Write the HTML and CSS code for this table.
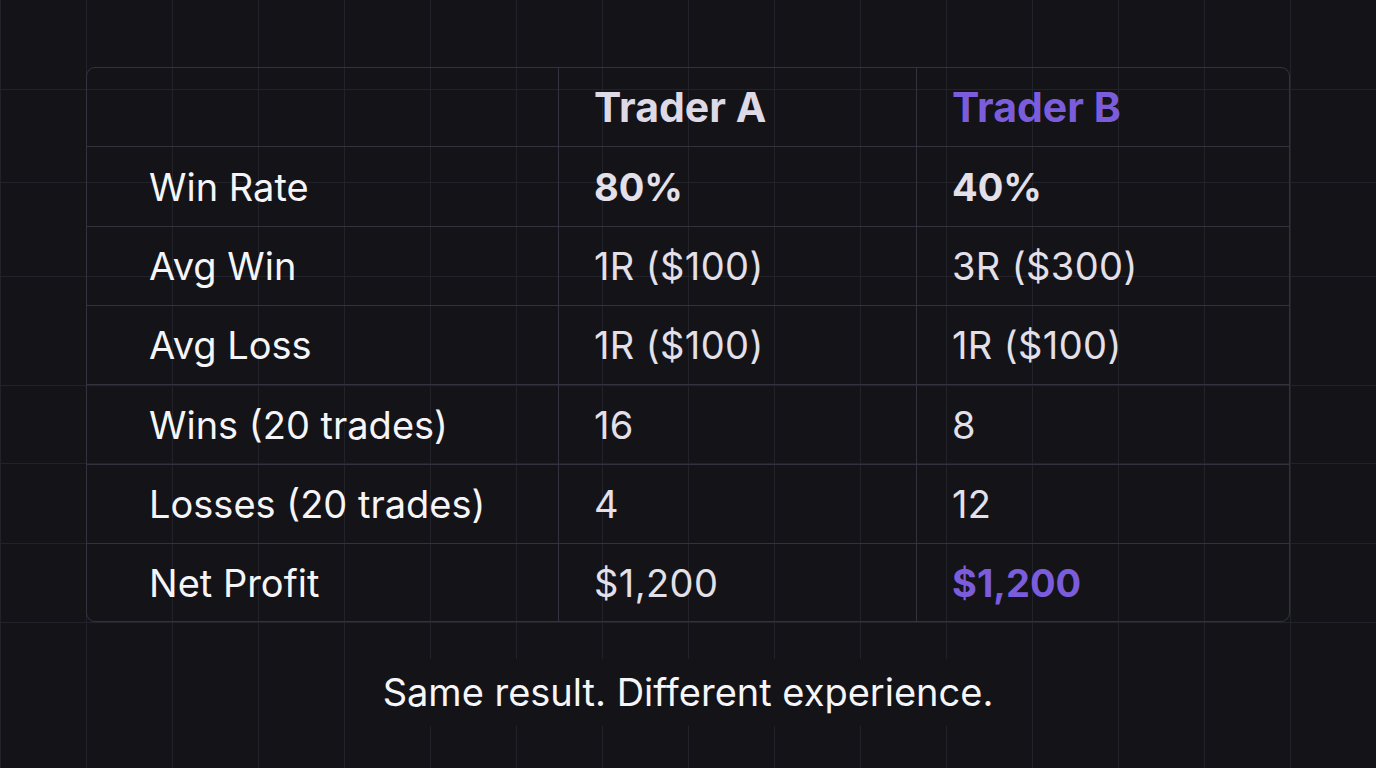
FILE: index.html
```html
<!DOCTYPE html>
<html lang="en">
<head>
<meta charset="utf-8">
<title>Trader comparison</title>
<link rel="stylesheet" href="styles.css">
</head>
<body>
  <main class="page">
    <div class="card">
      <div class="cell label head"></div>
      <div class="cell head">Trader A</div>
      <div class="cell head accent">Trader B</div>

      <div class="cell label">Win Rate</div>
      <div class="cell value strong">80%</div>
      <div class="cell value strong">40%</div>

      <div class="cell label">Avg Win</div>
      <div class="cell value">1R ($100)</div>
      <div class="cell value">3R ($300)</div>

      <div class="cell label">Avg Loss</div>
      <div class="cell value">1R ($100)</div>
      <div class="cell value">1R ($100)</div>

      <div class="cell label">Wins (20 trades)</div>
      <div class="cell value">16</div>
      <div class="cell value">8</div>

      <div class="cell label">Losses (20 trades)</div>
      <div class="cell value">4</div>
      <div class="cell value">12</div>

      <div class="cell label last">Net Profit</div>
      <div class="cell value last">$1,200</div>
      <div class="cell value last strong accent">$1,200</div>
    </div>
    <p class="caption"><span class="caption-text">Same result. Different experience.</span></p>
  </main>
</body>
</html>
```
FILE: styles.css
```css
html, body {
  margin: 0;
  padding: 0;
}

body {
  min-height: 768px;
  background-color: #131318;
  --grid: #22222b;
  background-image:
    linear-gradient(var(--grid), var(--grid)),
    linear-gradient(var(--grid), var(--grid)),
    linear-gradient(var(--grid), var(--grid)),
    linear-gradient(var(--grid), var(--grid)),
    linear-gradient(var(--grid), var(--grid)),
    linear-gradient(var(--grid), var(--grid)),
    linear-gradient(var(--grid), var(--grid)),
    linear-gradient(to right, transparent 85px, var(--grid) 85px, var(--grid) 86px);
  background-size:
    100% 1px, 100% 1px, 100% 1px, 100% 1px, 100% 1px, 100% 1px, 100% 1px,
    86px 100%;
  background-position:
    0 89px, 0 182px, 0 276px, 0 385px, 0 463px, 0 543px, 0 622px,
    1px 0;
  background-repeat:
    no-repeat, no-repeat, no-repeat, no-repeat, no-repeat, no-repeat, no-repeat,
    repeat-x;
  font-family: Inter, "Liberation Sans", sans-serif;
  color: #f4f4f7;
}

.page {
  padding: 67px 86px 0;
  display: flex;
  flex-direction: column;
  align-items: center;
}

.card {
  width: 100%;
  box-sizing: border-box;
  height: 555px;
  border: 1px solid #33333f;
  border-radius: 9px;
  display: grid;
  grid-template-columns: 472px 358px 1fr;
  grid-template-rows: 79px 80px 79px 79px 80px 79px 1fr;
}

.cell {
  box-sizing: border-box;
  display: flex;
  align-items: center;
  padding-left: 35px;
  border-bottom: 1px solid #33333f;
  border-right: 1px solid #33333f;
  font-size: 38px;
  color: #e3e0ea;
  white-space: nowrap;
}

.cell:nth-child(3n) {
  border-right: none;
}

.cell.last {
  border-bottom: none;
}

.label {
  padding-left: 62px;
  color: #f5f5f8;
}

.value {
  letter-spacing: 0.4px;
}

.head {
  font-weight: 700;
  font-size: 41px;
  color: #ddd9e6;
}

.strong {
  font-weight: 700;
  letter-spacing: 0;
}

.accent {
  color: #7b5ddc;
}

.caption {
  margin: 37px 0 0;
  text-align: center;
}

.caption-text {
  display: inline-block;
  padding: 11px 24px;
  background-color: #131318;
  font-size: 38px;
  line-height: 45px;
  color: #f6f6f8;
}
```
